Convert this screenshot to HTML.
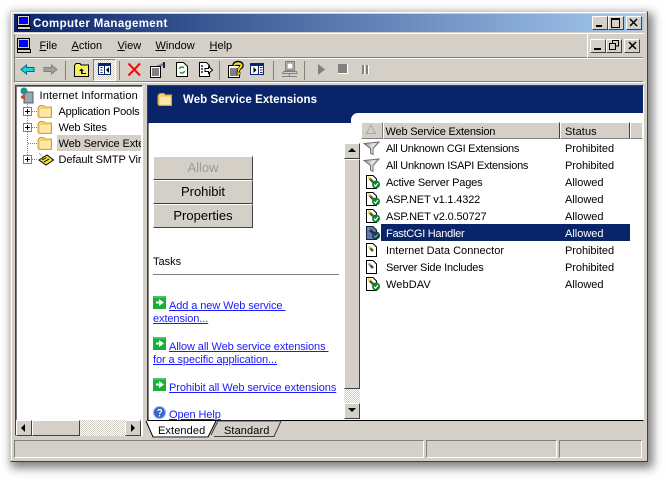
<!DOCTYPE html>
<html><head><meta charset="utf-8"><style>
html,body{margin:0;padding:0;width:666px;height:480px;overflow:hidden;background:#fff}
body{position:relative;font-family:"Liberation Sans",sans-serif;font-size:11px;color:#000}
.a,.t{position:absolute}
.t{white-space:nowrap;line-height:14px}
.b{position:absolute;box-sizing:border-box;background:#d4d0c8;border:1px solid;border-color:#fff #404040 #404040 #fff}
.btn{font-size:13px;text-align:center;line-height:21px}
svg{position:absolute;overflow:visible}
u{text-decoration:underline}
.lk{color:#1a1aff;text-decoration:underline;font-size:11px;letter-spacing:-.09px}
.dith{background:repeating-conic-gradient(#fff 0 25%,#d4d0c8 0 50%) 0 0/2px 2px}
</style></head><body>
<svg width="0" height="0" style="position:absolute"><defs>
<symbol id="pc" viewBox="0 0 16 16" overflow="visible"><rect x="1.5" y="0.5" width="12" height="10" fill="#d4d0c8" stroke="#000"/><rect x="3" y="2" width="9" height="7" fill="#00f"/><rect x="1.5" y="11.5" width="13" height="3" fill="#d4d0c8" stroke="#000"/></symbol>
<symbol id="fold" viewBox="0 0 16 15" overflow="visible"><path d="M1 3.500L3 1.500H7L8 3H14.500V13.500H2L1 12Z" fill="#f8d070" stroke="#d8a040"/><path d="M3 5H13.500V12.500H3Z" fill="#ffe8a8"/></symbol>
<symbol id="ok" viewBox="0 0 16 16" overflow="visible"><path d="M1.500 1.500H8L11.500 5V14.500H1.500Z" fill="#fff" stroke="#000"/><path d="M4 4L8 8" stroke="#505030" stroke-width="2.500"/><path d="M3 3L5 5" stroke="#e8e020" stroke-width="2"/><circle cx="11" cy="10.500" r="4" fill="#108030"/><path d="M9 10.500L10.500 12.200L13 9" stroke="#fff" fill="none" stroke-width="1.200"/></symbol>
<symbol id="funnel" viewBox="0 0 18 16" overflow="visible"><path d="M1 3.500L16 2L10 8.500V14.500L7.500 13V8.500Z" fill="url(#fg)" stroke="#707070"/></symbol>
<linearGradient id="fg" x1="0" x2="1" y1="0" y2="0"><stop offset="0" stop-color="#909090"/><stop offset=".6" stop-color="#e8e8e8"/><stop offset="1" stop-color="#b0b0b0"/></linearGradient>
<symbol id="go" viewBox="0 0 13 13" overflow="visible"><rect width="13" height="13" fill="#18b038"/><rect x=".5" y=".5" width="12" height="1" fill="#80d890"/><path d="M3 5.500H6V3L11 6.500L6 10V7.500H3Z" fill="#fff"/></symbol>
</defs></svg>
<!-- shadow + window -->
<div class="a" style="left:10px;top:11px;width:638px;height:451px;background:#d4d0c8;box-sizing:border-box;border:1px solid;border-color:#d4d0c8 #404040 #404040 #d4d0c8;box-shadow:3px 4px 9px 2px rgba(0,0,0,.5)"></div>
<div class="a" style="left:11px;top:12px;width:635px;height:1px;background:#fff"></div>
<div class="a" style="left:11px;top:12px;width:1px;height:448px;background:#fff"></div>
<!-- title bar -->
<div class="a" style="left:14px;top:14px;width:630px;height:18px;background:linear-gradient(90deg,#0a246a,#a6caf0)"></div>
<svg style="left:16px;top:15px" width="16" height="16"><use href="#pc"/></svg>
<div class="t" style="left:33px;top:16.500px;color:#fff;font-weight:bold;font-size:11.500px;letter-spacing:.36px">Computer Management</div>
<div class="b" style="left:592px;top:16px;width:16px;height:14px"></div><div class="a" style="left:596px;top:25px;width:6px;height:2px;background:#000"></div>
<div class="b" style="left:608px;top:16px;width:16px;height:14px"></div><div class="a" style="left:611px;top:18px;width:7px;height:7px;border:1px solid #000;border-top-width:2px"></div>
<div class="b" style="left:626px;top:16px;width:16px;height:14px"></div><svg style="left:629px;top:18px" width="10" height="10"><path d="M1 1L8 8M8 1L1 8" stroke="#000" stroke-width="1.500"/></svg>
<!-- menu bar -->
<div class="a" style="left:14px;top:33px;width:630px;height:1px;background:#fff"></div>
<div class="a" style="left:14px;top:34px;width:1px;height:48px;background:#808080"></div>
<div class="a" style="left:15px;top:57px;width:628px;height:1px;background:#808080"></div>
<div class="a" style="left:15px;top:58px;width:628px;height:1px;background:#fff"></div>
<div class="a" style="left:587px;top:34px;width:1px;height:24px;background:#fff"></div>
<svg style="left:16px;top:38px" width="16" height="16"><use href="#pc"/></svg>
<div class="t" style="left:39.500px;top:39px"><u>F</u>ile</div>
<div class="t" style="left:71.500px;top:39px"><u>A</u>ction</div>
<div class="t" style="left:117.500px;top:39px"><u>V</u>iew</div>
<div class="t" style="left:155.500px;top:39px"><u>W</u>indow</div>
<div class="t" style="left:209.500px;top:39px"><u>H</u>elp</div>
<div class="b" style="left:590px;top:39px;width:16px;height:14px"></div><div class="a" style="left:594px;top:48px;width:7px;height:2px;background:#000"></div>
<div class="b" style="left:606px;top:39px;width:16px;height:14px"></div><svg style="left:609px;top:40px" width="10" height="11"><path d="M3.500 3V.5H9.500V6H7M.5 3.500H6.500V9.500H.5Z" fill="none" stroke="#000"/></svg>
<div class="b" style="left:624px;top:39px;width:16px;height:14px"></div><svg style="left:628px;top:41px" width="10" height="10"><path d="M1 1L8 8M8 1L1 8" stroke="#000" stroke-width="1.500"/></svg>
<!-- toolbar -->
<div class="a" style="left:15px;top:81px;width:628px;height:1px;background:#808080"></div>
<div class="a" style="left:15px;top:82px;width:630px;height:1px;background:#fff"></div>
<svg style="left:20px;top:63px" width="16" height="16"><path d="M1 6.500L6.500 2V4.500H14V8.500H6.500V11Z" fill="#19d6d6" stroke="#006a80"/></svg>
<svg style="left:43px;top:63px" width="16" height="16"><path d="M14 6.500L8.500 2V4.500H1V8.500H8.500V11Z" fill="#a0a0a0" stroke="#808080"/></svg>
<div class="a" style="left:65px;top:61px;width:1px;height:19px;background:#808080"></div>
<svg style="left:74px;top:62px" width="16" height="16"><path d="M.5 3.500L2 1.500H6L7 3H14.500V14.500H.5Z" fill="#f6f060" stroke="#000"/><path d="M5 9L7.500 6.500L10 9H8.500V11H12V12H7V9Z" fill="#000"/></svg>
<div class="a dith" style="left:93px;top:59px;width:23px;height:22px;box-sizing:border-box;border:1px solid;border-color:#808080 #fff #fff #808080"></div>
<svg style="left:98px;top:63px" width="14" height="14"><rect x=".5" y=".5" width="12" height="11" fill="#fff" stroke="#0a246a"/><rect x="1" y="1" width="12" height="2" fill="#0a246a"/><rect x="6" y="1" width="1" height="11" fill="#0a246a"/><path d="M2.500 4.500h2M2.500 7h2M2.500 9.500h2" stroke="#0a246a"/><path d="M11 4V10L8 7Z" fill="#000"/></svg>
<div class="a" style="left:119px;top:61px;width:1px;height:19px;background:#808080"></div>
<svg style="left:127px;top:62px" width="15" height="15"><path d="M1.500 1.500L13 13.500M13 1.500L1.500 13.500" stroke="#e01010" stroke-width="2"/></svg>
<svg style="left:149px;top:62px" width="18" height="16"><path d="M1.500 4.500H11.500V15.500H1.500Z" fill="#fff" stroke="#000"/><path d="M3 7h7M3 9h7M3 11h7M3 13h7" stroke="#000"/><path d="M7 4L14 1V4Z" fill="#808080"/><rect x="14" y="0" width="2" height="6" fill="#0a246a"/></svg>
<svg style="left:175px;top:62px" width="14" height="16"><path d="M1.500 .5H8.500L12.500 4.500V14.500H1.500Z" fill="#fff" stroke="#000"/><path d="M4.500 7A2.500 2.500 0 0 1 9 6M9.500 9A2.500 2.500 0 0 1 5 10" fill="none" stroke="#0a8a2a" stroke-width="1.300"/></svg>
<svg style="left:198px;top:62px" width="16" height="16"><path d="M1.500 .5H8.500L11.500 3.500V14.500H1.500Z" fill="#fff" stroke="#000"/><path d="M3 4h2M3 7h2M3 10h2" stroke="#0a246a" stroke-width="1.500"/><path d="M7 6.500H10.500V4.500L14.500 8L10.500 11.500V9.500H7Z" fill="#fff" stroke="#000"/></svg>
<div class="a" style="left:219px;top:61px;width:1px;height:19px;background:#808080"></div>
<svg style="left:227px;top:61px" width="18" height="18"><path d="M1.500 4.500H12.500V16.500H1.500Z" fill="#fff" stroke="#000"/><path d="M3 8h8M3 10h8M3 12h8M3 14h8" stroke="#000"/><path d="M7 4.500C7 .5 15 .5 15 4.500C15 7 11.500 7 11.500 9.500" fill="none" stroke="#000" stroke-width="3.500"/><path d="M7.500 4.500C7.500 1.500 14.500 1.500 14.500 4.500C14.500 6.500 11.500 7 11.500 9.500" fill="none" stroke="#ffe000" stroke-width="2"/><rect x="10" y="11" width="3" height="3" fill="#ffe000" stroke="#000" stroke-width=".6"/></svg>
<svg style="left:250px;top:63px" width="15" height="14"><rect x=".5" y=".5" width="13" height="11" fill="#fff" stroke="#0a246a"/><rect x="1" y="1" width="13" height="2" fill="#0a246a"/><rect x="8" y="1" width="1" height="11" fill="#0a246a"/><path d="M10 4.500h2.500M10 7h2.500M10 9.500h2.500" stroke="#0a246a"/><path d="M3.500 4V10L6.500 7Z" fill="#000"/></svg>
<div class="a" style="left:273px;top:61px;width:1px;height:19px;background:#808080"></div>
<svg style="left:281px;top:61px" width="17" height="17"><path d="M4.500 .5H13.500V9.500H4.500Z" fill="#d4d0c8" stroke="#808080"/><rect x="6" y="2" width="6" height="6" fill="#fff" stroke="#808080"/><path d="M2.500 10.500H15.500L16 12.500H1.500Z" fill="#d4d0c8" stroke="#808080"/><path d="M8.500 13V15M1 15.500H16" stroke="#808080"/></svg>
<div class="a" style="left:304px;top:61px;width:1px;height:19px;background:#808080"></div>
<svg style="left:317px;top:63px" width="10" height="14"><path d="M1 1V12L8 6.500Z" fill="#808080"/></svg>
<div class="a" style="left:338px;top:64px;width:9px;height:9px;background:#808080;border-right:1px solid #fff;border-bottom:1px solid #fff"></div>
<div class="a" style="left:362px;top:65px;width:2px;height:9px;background:#808080;border-right:1px solid #fff"></div>
<div class="a" style="left:366px;top:65px;width:2px;height:9px;background:#808080;border-right:1px solid #fff"></div>

<!-- tree pane -->
<div class="a" style="left:15px;top:85px;width:128px;height:351px;box-sizing:border-box;border:1px solid;border-color:#404040 #fff #fff #404040;background:#fff;box-shadow:inset 1px 1px 0 #808080"></div>
<svg style="left:18px;top:87px" width="18" height="17"><rect x="6" y="5" width="9" height="11" fill="#98a8b0" stroke="#506068"/><circle cx="6" cy="4" r="3.500" fill="#209090"/><path d="M3 9L7 7V13L3 11Z" fill="#c05030"/></svg>
<div class="t" style="left:39.500px;top:89px;letter-spacing:.15px">Internet Information</div>
<svg style="left:23px;top:96px" width="24" height="70"><path d="M4.500 8V63M9 15.500H15M9 31.500H15M5 47.500H15M9 63.500H15" stroke="#808080" stroke-dasharray="1 1"/></svg>
<div class="a" style="left:23px;top:107px;border:1px solid #808080;background:#fff;width:7px;height:7px"></div><div class="a" style="left:25px;top:111px;width:5px;height:1px;background:#000"></div><div class="a" style="left:27px;top:109px;width:1px;height:5px;background:#000"></div>
<div class="a" style="left:23px;top:123px;border:1px solid #808080;background:#fff;width:7px;height:7px"></div><div class="a" style="left:25px;top:127px;width:5px;height:1px;background:#000"></div><div class="a" style="left:27px;top:125px;width:1px;height:5px;background:#000"></div>
<div class="a" style="left:23px;top:155px;border:1px solid #808080;background:#fff;width:7px;height:7px"></div><div class="a" style="left:25px;top:159px;width:5px;height:1px;background:#000"></div><div class="a" style="left:27px;top:157px;width:1px;height:5px;background:#000"></div>
<svg style="left:37px;top:104px" width="16" height="15"><use href="#fold"/></svg>
<svg style="left:37px;top:120px" width="16" height="15"><use href="#fold"/></svg>
<svg style="left:37px;top:136px" width="16" height="15"><use href="#fold"/></svg>
<div class="t" style="left:58.500px;top:105px;letter-spacing:-.2px">Application Pools</div>
<div class="t" style="left:58.500px;top:121px;letter-spacing:-.2px">Web Sites</div>
<div class="a" style="left:57px;top:135px;width:84px;height:16px;background:#d4d0c8"></div>
<div class="t" style="left:58.500px;top:137px;width:82.500px;overflow:hidden;letter-spacing:-.1px">Web Service Extensions</div>
<svg style="left:38px;top:152px" width="17" height="15"><path d="M1 8L9 3L15.500 8L8 13Z" fill="#f0e040" stroke="#000"/><path d="M4 8L8.500 5.500M6 10L11 7" stroke="#000"/><path d="M1 1L5 5" stroke="#808080" stroke-dasharray="1 1"/></svg>
<div class="t" style="left:58.500px;top:153px;width:82.500px;overflow:hidden;letter-spacing:-.1px">Default SMTP Virtual</div>
<!-- tree hscroll -->
<div class="a dith" style="left:16px;top:420px;width:125px;height:16px"></div>
<div class="b" style="left:16px;top:420px;width:16px;height:16px"></div><svg style="left:20px;top:423px" width="8" height="10"><path d="M5 1V9L1 5Z" fill="#000"/></svg>
<div class="b" style="left:32px;top:420px;width:48px;height:16px"></div>
<div class="b" style="left:125px;top:420px;width:16px;height:16px"></div><svg style="left:130px;top:423px" width="8" height="10"><path d="M1 1V9L5 5Z" fill="#000"/></svg>

<!-- right pane -->
<div class="a" style="left:147px;top:85px;width:497px;height:336px;box-sizing:border-box;border:1px solid;border-color:#404040 #fff #000 #404040;background:#fff;box-shadow:inset 1px 1px 0 #808080"></div>
<div class="a" style="left:148px;top:86px;width:495px;height:37px;background:#0a246a"></div>
<div class="a" style="left:351px;top:113px;width:292px;height:10px;background:#fff;border-top-left-radius:7px"></div>
<svg style="left:157px;top:92px" width="16" height="15"><use href="#fold"/></svg>
<div class="t" style="left:183px;top:92.500px;color:#fff;font-weight:bold;font-size:11.500px;letter-spacing:.06px">Web Service Extensions</div>
<!-- buttons -->
<div class="b btn" style="left:153px;top:156px;width:100px;height:24px;color:#9a9a9a">Allow</div>
<div class="b btn" style="left:153px;top:180px;width:100px;height:24px">Prohibit</div>
<div class="b btn" style="left:153px;top:204px;width:100px;height:24px">Properties</div>
<div class="t" style="left:153px;top:254.500px">Tasks</div>
<div class="a" style="left:153px;top:274px;width:186px;height:1px;background:#808080"></div>
<svg style="left:153px;top:296px" width="13" height="13"><use href="#go"/></svg>
<div class="t lk" style="left:169px;top:299px;white-space:pre">Add a new Web service </div>
<div class="t lk" style="left:153px;top:312px">extension...</div>
<svg style="left:153px;top:337px" width="13" height="13"><use href="#go"/></svg>
<div class="t lk" style="left:169px;top:340px;white-space:pre">Allow all Web service extensions </div>
<div class="t lk" style="left:153px;top:353px">for a specific application...</div>
<svg style="left:153px;top:378px" width="13" height="13"><use href="#go"/></svg>
<div class="t lk" style="left:169px;top:381px">Prohibit all Web service extensions</div>
<svg style="left:153px;top:406px" width="13" height="13"><circle cx="6.500" cy="6.500" r="6" fill="#3868c8" stroke="#a0b8e0"/><path d="M5 5C5 3 8.500 3 8.500 5C8.500 6.500 6.500 6.500 6.500 8M6.500 9V10.500" stroke="#fff" fill="none" stroke-width="1.200"/></svg>
<div class="a" style="left:148px;top:408px;width:190px;height:12px;overflow:hidden"><div class="t lk" style="left:21px;top:0">Open Help</div></div>
<!-- scrollbar middle -->
<div class="a dith" style="left:344px;top:143px;width:16px;height:276px"></div>
<div class="b" style="left:344px;top:143px;width:16px;height:16px"></div><svg style="left:347px;top:147px" width="10" height="7"><path d="M1 5H9L5 1Z" fill="#000"/></svg>
<div class="b" style="left:344px;top:159px;width:16px;height:230px"></div>
<div class="b" style="left:344px;top:403px;width:16px;height:16px"></div><svg style="left:347px;top:407px" width="10" height="7"><path d="M1 1H9L5 5Z" fill="#000"/></svg>
<!-- list header -->
<div class="b" style="left:361px;top:122px;width:22px;height:17px;border-color:#fff #808080 #808080 #fff"></div>
<svg style="left:365px;top:124px" width="12" height="11"><path d="M6 1L10.500 9.500H1.500Z" fill="none" stroke="#a8a8a8"/></svg>
<div class="b" style="left:383px;top:122px;width:177px;height:17px;border-color:#fff #404040 #808080 #fff"></div>
<div class="b" style="left:560px;top:122px;width:70px;height:17px;border-color:#fff #404040 #808080 #fff"></div>
<div class="b" style="left:630px;top:122px;width:13px;height:17px;border-color:#fff #fff #808080 #fff"></div>
<div class="t" style="left:385.500px;top:124.500px;letter-spacing:-.18px">Web Service Extension</div>
<div class="t" style="left:565px;top:124.500px;letter-spacing:.1px">Status</div>
<!-- rows -->
<div class="a" style="left:381px;top:224px;width:249px;height:17px;background:#0a246a"></div>
<svg style="left:363px;top:140px" width="18" height="16"><use href="#funnel"/></svg>
<svg style="left:363px;top:157px" width="18" height="16"><use href="#funnel"/></svg>
<svg style="left:365px;top:174px" width="16" height="16"><use href="#ok"/></svg>
<svg style="left:365px;top:191px" width="16" height="16"><use href="#ok"/></svg>
<svg style="left:365px;top:208px" width="16" height="16"><use href="#ok"/></svg>
<svg style="left:365px;top:225px" width="16" height="16"><path d="M1.500 1.500H8L11.500 5V14.500H1.500Z" fill="#6878a8" stroke="#10204a"/><path d="M4 4L8 8" stroke="#202840" stroke-width="2.500"/><path d="M3 3L5 5" stroke="#8890a0" stroke-width="2"/><circle cx="11" cy="10.500" r="4" fill="#0a4050"/><path d="M9 10.500L10.500 12.200L13 9" stroke="#8098b0" fill="none" stroke-width="1.200"/></svg>
<svg style="left:365px;top:242px" width="16" height="16"><path d="M1.500 1.500H8L11.500 5V14.500H1.500Z" fill="#fff" stroke="#000"/><path d="M4.500 5.500L8 9" stroke="#505030" stroke-width="2.500"/><path d="M3.500 4.500L5.500 6.500" stroke="#e8e020" stroke-width="2"/></svg>
<svg style="left:365px;top:259px" width="16" height="16"><path d="M1.500 1.500H8L11.500 5V14.500H1.500Z" fill="#fff" stroke="#000"/><path d="M4.500 5.500L8 9" stroke="#505030" stroke-width="2.500"/><path d="M3.500 4.500L5.500 6.500" stroke="#a0a0a0" stroke-width="2"/></svg>
<svg style="left:365px;top:276px" width="16" height="16"><use href="#ok"/></svg>
<div class="t" style="left:386px;top:142px;letter-spacing:-.29px">All Unknown CGI Extensions</div><div class="t" style="left:565px;top:142px;letter-spacing:-.05px">Prohibited</div>
<div class="t" style="left:386px;top:159px;letter-spacing:-.25px">All Unknown ISAPI Extensions</div><div class="t" style="left:565px;top:159px;letter-spacing:-.05px">Prohibited</div>
<div class="t" style="left:386px;top:176px;letter-spacing:-.17px">Active Server Pages</div><div class="t" style="left:565px;top:176px">Allowed</div>
<div class="t" style="left:386px;top:193px;letter-spacing:-.16px">ASP.NET v1.1.4322</div><div class="t" style="left:565px;top:193px">Allowed</div>
<div class="t" style="left:386px;top:210px;letter-spacing:-.14px">ASP.NET v2.0.50727</div><div class="t" style="left:565px;top:210px">Allowed</div>
<div class="t" style="left:386px;top:227px;letter-spacing:-.28px;color:#fff">FastCGI Handler</div><div class="t" style="left:565px;top:227px;color:#fff">Allowed</div>
<div class="t" style="left:386px;top:244px;letter-spacing:.03px">Internet Data Connector</div><div class="t" style="left:565px;top:244px;letter-spacing:-.05px">Prohibited</div>
<div class="t" style="left:386px;top:261px;letter-spacing:-.2px">Server Side Includes</div><div class="t" style="left:565px;top:261px;letter-spacing:-.05px">Prohibited</div>
<div class="t" style="left:386px;top:278px;letter-spacing:.1px">WebDAV</div><div class="t" style="left:565px;top:278px">Allowed</div>
<!-- tabs -->
<svg style="left:146px;top:420px" width="150" height="19"><path d="M68 16.500H128L135 1H72L65 15" fill="#d4d0c8" stroke="#404040"/><path d="M0 1L7 17H62L70 1" fill="#fff" stroke="#000"/><path d="M7 17.500H62" stroke="#808080"/></svg>
<div class="t" style="left:158px;top:424px;letter-spacing:.1px">Extended</div>
<div class="t" style="left:224px;top:424px;letter-spacing:.1px">Standard</div>
<!-- status bar -->
<div class="a" style="left:14px;top:440px;width:410px;height:18px;box-sizing:border-box;border:1px solid;border-color:#808080 #fff #fff #808080"></div>
<div class="a" style="left:426px;top:440px;width:131px;height:18px;box-sizing:border-box;border:1px solid;border-color:#808080 #fff #fff #808080"></div>
<div class="a" style="left:559px;top:440px;width:83px;height:18px;box-sizing:border-box;border:1px solid;border-color:#808080 #fff #fff #808080"></div>
</body></html>
